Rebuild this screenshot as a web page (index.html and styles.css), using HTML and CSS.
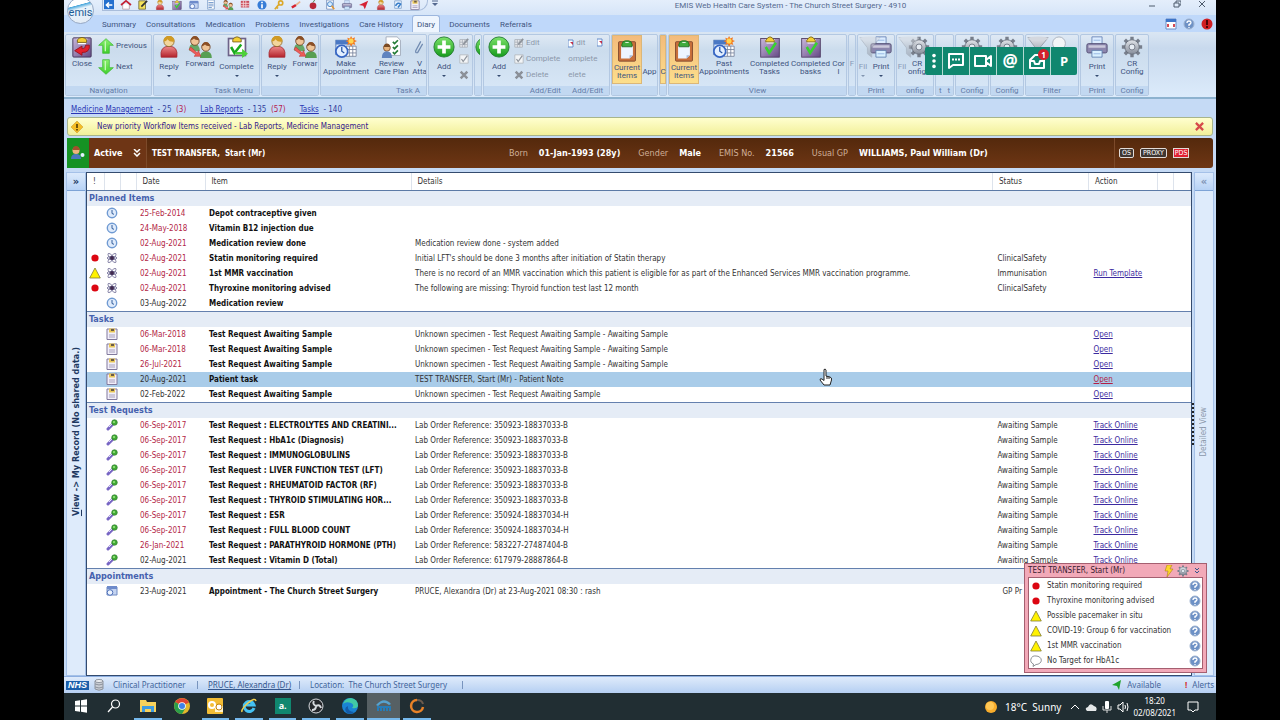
FILE: index.html
```html
<!DOCTYPE html>
<html lang="en">
<head>
    <meta charset="UTF-8">
    <title>EMIS Web Health Care System</title>
    <link rel="stylesheet" href="styles.css">
</head>
<body>
<svg class="defs" aria-hidden="true">
    <defs>
        <linearGradient id="gGreen" x1="0" y1="0" x2="0" y2="1"><stop offset="0" stop-color="#7de36a"/><stop offset="1" stop-color="#149a1c"/></linearGradient>
        <linearGradient id="gArrow" x1="0" y1="0" x2="0" y2="1"><stop offset="0" stop-color="#8df070"/><stop offset="1" stop-color="#3fce2c"/></linearGradient>
        <linearGradient id="gRed" x1="0" y1="0" x2="0" y2="1"><stop offset="0" stop-color="#ef8c8c"/><stop offset="1" stop-color="#b3222c"/></linearGradient>
        <linearGradient id="gPurple" x1="0" y1="0" x2="1" y2="1"><stop offset="0" stop-color="#c9b8dc"/><stop offset="1" stop-color="#644a84"/></linearGradient>
        <linearGradient id="gGrey" x1="0" y1="0" x2="0" y2="1"><stop offset="0" stop-color="#e2e5ea"/><stop offset="1" stop-color="#858c99"/></linearGradient>
    </defs>
    <symbol id="close" viewBox="0 0 24 24"><rect x="2" y="2" width="20" height="21" rx="1" fill="url(#gPurple)" stroke="#443358"/><path d="M6 3h12l-2 6H8z" fill="#fff"/><path d="M7 4q5-5 10 0v3H7z" fill="#f4cf35" stroke="#75601c"/><path d="M20 10q1 8-8 8v3l-8-5 8-5v3q4 0 4-4z" fill="#e5202c" stroke="#9a1420"/></symbol>
    <symbol id="up" viewBox="0 0 24 24"><path d="M12 1l11 10h-6v12H7V11H1z" fill="url(#gArrow)" stroke="#35b52b"/><path d="M11 5v15" stroke="#c8f9b8" stroke-width="2"/></symbol>
    <symbol id="down" viewBox="0 0 24 24"><path d="M12 23l11-10h-6V1H7v12H1z" fill="url(#gArrow)" stroke="#35b52b"/><path d="M11 3v14" stroke="#c8f9b8" stroke-width="2"/></symbol>
    <symbol id="person" viewBox="0 0 24 28"><path d="M2 27q-2-14 10-14t10 14z" fill="url(#gRed)" stroke="#a42a30"/><circle cx="12" cy="7" r="6.500" fill="#f3d59b" stroke="#8e6723"/><path d="M5 7Q5 0 12 0t7 7q-6 1-9-3-1 3-5 3" fill="#d19b24"/></symbol>
    <symbol id="people" viewBox="0 0 28 26"><path d="M1 17q0-8 6-8t7 9z" fill="#64a867"/><circle cx="8" cy="6" r="5" fill="#efc496" stroke="#704326"/><path d="M3 5q1-5 5-5t5 5q-5 0-6-2-2 2-4 2" fill="#8b4f25"/><path d="M14 26q0-8 7-8t7 8z" fill="#579f53"/><circle cx="21" cy="13" r="5" fill="#efc496" stroke="#704326"/><path d="M16 12q1-5 5-5t5 5q-5 0-6-2-2 2-4 2" fill="#8b4f25"/><path d="M3 13l8 7 1-3 3 7-8 0 2-2-8-6z" fill="#ed5c58" stroke="#ba2b2b" stroke-width=".6"/></symbol>
    <symbol id="complete" viewBox="0 0 26 26"><rect x="3" y="3" width="20" height="20" fill="#fff" stroke="#6d6389" stroke-width="2"/><path d="M8 4q5-6 10 0v3H8z" fill="#f4cf35" stroke="#75601c"/><path d="M6 13l4 7 8-10" fill="none" stroke="#19a91e" stroke-width="3"/><path d="M11 19h8v-4l7 6-7 5v-4h-8z" fill="#4dd139"/></symbol>
    <symbol id="clip" viewBox="0 0 24 26"><rect x="2" y="2" width="20" height="23" rx="1" fill="#c9703b" stroke="#77412a"/><path d="M5 7h14v11l-4 4H5z" fill="#eef5ff"/><path d="M19 18h-4v4" fill="#a9bbd8"/><path d="M6 5q1-4 4-4h4q3 0 4 4v3H6z" fill="#40ab3d" stroke="#1f6922"/><path d="M10 3h4" stroke="#fff"/></symbol>
    <symbol id="doneclip" viewBox="0 0 24 26"><rect x="1" y="3" width="22" height="22" fill="url(#gPurple)" stroke="#4b385f"/><path d="M6 4h12l-2 5H8z" fill="#fff"/><path d="M7 5q5-8 10 0v2H7z" fill="#f4cf35" stroke="#75601c"/><path d="M7 13l4 7 8-12" fill="none" stroke="#36d32f" stroke-width="3"/></symbol>
    <symbol id="appt" viewBox="0 0 26 26"><rect x="1" y="5" width="18" height="17" fill="#d8e5f8" stroke="#4e73ad"/><path d="M1 5h18v5H1z" fill="#4a78c4"/><path d="M13 12h12v12H13z" fill="#fff" stroke="#77839b"/><path d="M17 12v12M21 12v12M13 16h12M13 20h12" stroke="#77839b"/><path d="M19 0l1.500 3 3-1.500-.5 3.200 3 1.300-3 1.500 1 3-3-1-2 3-1.500-3-3 1 1-3-3-1.500 3-1-1-3 3 1z" fill="#f27b22"/><circle cx="19" cy="6" r="3" fill="#ffd551"/><circle cx="8" cy="18" r="7" fill="#e3efff" stroke="#3565c4" stroke-width="2"/><path d="M8 13v5l3 2" fill="none" stroke="#2855a5" stroke-width="1.500"/></symbol>
    <symbol id="plan" viewBox="0 0 24 26"><path d="M5 1h13l4 4v18H5z" fill="#fff" stroke="#9ba5b6"/><path d="M13 7l2 2 4-4M13 13l2 2 4-4M13 19l2 2 4-4" fill="none" stroke="#257c36" stroke-width="2"/><circle cx="6" cy="14" r="4" fill="#e8b57e" stroke="#7b4b25"/><path d="M0 26q0-8 6-8t6 8z" fill="#5f83bf"/><path d="M2 13q1-4 4-4t4 4" fill="#7b4b25"/></symbol>
    <symbol id="plus" viewBox="0 0 24 24"><circle cx="12" cy="12" r="11" fill="url(#gGreen)" stroke="#237d31"/><path d="M12 5v14M5 12h14" stroke="#fff" stroke-width="4"/></symbol>
    <symbol id="edit" viewBox="0 0 12 12"><path d="M1 2h9v9H1zM1 5h9M1 8h9M4 2v9M7 2v9" fill="#f0f2f4" stroke="#a6acb4"/><path d="M5 8l6-7" stroke="#8e949c" stroke-width="2"/></symbol>
    <symbol id="tick" viewBox="0 0 12 12"><path d="M1 1h10v10H1z" fill="#f3f5f7" stroke="#b0b6bd"/><path d="M3 6l2 3 5-7" fill="none" stroke="#8f959d" stroke-width="1.500"/></symbol>
    <symbol id="cross" viewBox="0 0 12 12"><path d="M2 2l8 8M10 2l-8 8" stroke="#8b9098" stroke-width="3"/></symbol>
    <symbol id="print" viewBox="0 0 26 26"><path d="M7 1h12v10H7z" fill="#dcecff" stroke="#6480b3"/><rect x="1" y="9" width="24" height="11" rx="2" fill="#8c86ad" stroke="#4f4b70"/><path d="M3 11h20v3H3z" fill="#cbc9dc"/><path d="M7 17h12v8H7z" fill="#d9f0ff" stroke="#5e7fae"/><path d="M9 5h8M9 21h8" stroke="#8eb1df"/></symbol>
    <symbol id="gear" viewBox="-13 -13 26 26"><g fill="#777e8b"><path d="M-2-12h4v24h-4z"/><path d="M-2-12h4v24h-4z" transform="rotate(45)"/><path d="M-2-12h4v24h-4z" transform="rotate(90)"/><path d="M-2-12h4v24h-4z" transform="rotate(135)"/></g><circle r="8.500" fill="url(#gGrey)" stroke="#666d79"/><circle r="3.500" fill="#e7edf4" stroke="#69707c"/></symbol>
    <symbol id="funnel" viewBox="0 0 26 26"><path d="M1 2h24L15 14v11l-5-4v-7z" fill="url(#gGrey)" stroke="#9299a4"/><ellipse cx="13" cy="3" rx="12" ry="2.500" fill="#d4d8df"/></symbol>
    <symbol id="clock" viewBox="0 0 12 12"><circle cx="6" cy="6" r="4.700" fill="#dfebfb" stroke="#6f9ad2" stroke-width="1.400"/><path d="M6 3v3.500l2 .8" fill="none" stroke="#315c9b"/></symbol>
    <symbol id="atom" viewBox="-6 -6 12 12"><g fill="none" stroke="#6a6792" stroke-width=".8"><ellipse rx="5.800" ry="1.800" transform="rotate(50)"/><ellipse rx="5" ry="1.500"/><ellipse rx="5.800" ry="1.800" transform="rotate(-50)"/></g><circle r="2" fill="#40294e"/></symbol>
    <symbol id="task" viewBox="0 0 12 12"><path d="M1 1h10v10.500H1z" fill="#f2effa" stroke="#81799c"/><path d="M3 .5h6v4H3z" fill="#eac85a"/><path d="M5 1h3v2H5z" fill="#6a5b48"/><path d="M3 7h6M3 9h6" stroke="#a7a0bc"/></symbol>
    <symbol id="tube" viewBox="0 0 12 12"><path d="M2 10l5-5" stroke="#7866c4" stroke-width="3" stroke-linecap="round"/><path d="M3 8l3-3" stroke="#e3dcff"/><circle cx="8.500" cy="3.500" r="2.800" fill="#42ab35" stroke="#28742a" stroke-width=".6"/><circle cx="8" cy="3" r="1" fill="#9de783"/></symbol>
    <symbol id="diary" viewBox="0 0 12 12"><path d="M1 2h10v8H1z" fill="#c4d4f1" stroke="#718bc2"/><path d="M1 1h10v3H1z" fill="#6e8bcb"/><circle cx="4" cy="7.500" r="2.800" fill="#eef5ff" stroke="#4d6fb8"/></symbol>
    <symbol id="dot" viewBox="0 0 12 12"><circle cx="6" cy="6" r="3.600" fill="#dc0612"/></symbol>
    <symbol id="warn" viewBox="0 0 12 12"><path d="M6 1l5.300 10H.7z" fill="#fff200" stroke="#817c35" stroke-width=".8"/></symbol>
    <symbol id="bubble" viewBox="0 0 12 12"><path d="M6 1a5 4 0 0 1 0 8.500L3 11.500l.5-2.500A4.500 4.200 0 0 1 6 1z" fill="#fff" stroke="#74777e" stroke-width=".8"/></symbol>
    <symbol id="help" viewBox="0 0 12 12"><circle cx="6" cy="6" r="5" fill="#6d91c6" stroke="#9eb2cf"/><path d="M4 5q0-2 2-2t2 1.500Q8 6 6 6.500V8M6 9v1" fill="none" stroke="#fff" stroke-width="1.300"/></symbol>
</svg>

<div class="window">
    <header>
        <div class="titlebar">
            <div class="quick">
                <svg viewBox="0 0 12 12"><path d="M0 0h12v11H0z" fill="#2470ce"/><path d="M10 6H3M6 3L3 6l3 3" fill="none" stroke="#fff" stroke-width="2"/></svg>
                <svg viewBox="0 0 12 12"><path d="M2 5v6h8V5" fill="#fff" stroke="#b59ca6"/><path d="M0 6l6-5 6 5" fill="none" stroke="#c42235" stroke-width="2"/></svg>
                <svg viewBox="0 0 12 12"><path d="M1 1h8v10H1z" fill="#f5e35a" stroke="#6f6835"/><path d="M4 8l7-7" stroke="#333" stroke-width="2"/></svg>
                <svg><use href="#person"/></svg>
                <svg><use href="#doneclip"/></svg>
                <svg><use href="#diary"/></svg>
                <svg viewBox="0 0 12 12"><path d="M2 0h8v11H2z" fill="#fff" stroke="#7d9dca"/><path d="M3 3h6M3 5h6M3 7h6M3 9h4" stroke="#638dc5"/></svg>
                <svg><use href="#people"/></svg>
                <svg viewBox="0 0 12 12"><path d="M1 1h10v8H1z" fill="#c94d5c"/><path d="M1 4h10M1 7h10M4 1v8M7 1v8" stroke="#f6dbe0"/></svg>
                <svg viewBox="0 0 12 12"><circle cx="6" cy="6" r="5.500" fill="#377dd7"/><path d="M6 2v2M6 5v5" stroke="#fff" stroke-width="2"/></svg>
                <svg viewBox="0 0 12 12"><circle cx="8" cy="3.500" r="2.500" fill="none" stroke="#dba82a" stroke-width="2"/><path d="M6 5l-5 6M3 9l2 1" stroke="#dba82a" stroke-width="2"/></svg>
                <svg viewBox="0 0 12 12"><path d="M1 9l5-3" stroke="#d62330" stroke-width="3"/><path d="M6 6l5-4" stroke="#e9b28d" stroke-width="2"/></svg>
                <svg viewBox="0 0 12 12"><circle cx="6" cy="7" r="4" fill="#b82838"/><path d="M6 3l2-3" stroke="#3d7231"/></svg>
                <svg viewBox="0 0 12 12"><path d="M2 0h8v11H2z" fill="#fff" stroke="#718bb8"/><circle cx="6" cy="5" r="3" fill="#d4ebff" stroke="#3778c2"/><path d="M8 7l3 4" stroke="#e09535" stroke-width="2"/></svg>
                <svg><use href="#print"/></svg>
                <svg viewBox="0 0 12 12"><path d="M0 6l11-5-4 10-2-4z" fill="#d52334"/></svg>
                <svg><use href="#person"/></svg>
                <svg viewBox="0 0 12 12"><path d="M2 1h8v9H2z" fill="#eaf4ff" stroke="#84a4cd"/><path d="M3 7q3-5 6-2L6 9" fill="none" stroke="#377cc8" stroke-width="2"/></svg>
                <svg><use href="#task"/></svg>
            </div>
            <svg class="more" viewBox="0 0 8 8"><path d="M1 1h6" stroke="#54698f"/><path d="M1 3h6L4 6z" fill="#54698f"/></svg>
            <h1>EMIS Web Health Care System - The Church Street Surgery - 4910</h1>
            <div class="winbuttons">
                <button aria-label="Minimise"><svg viewBox="0 0 8 8"><path d="M1 6h6" stroke="#4d5a6c"/></svg></button>
                <button aria-label="Restore"><svg viewBox="0 0 8 8"><path d="M1 3h5v4H1zM3 3V1h5v4H6" fill="none" stroke="#4d5a6c"/></svg></button>
                <button aria-label="Close window"><svg viewBox="0 0 8 8"><path d="M1 1l6 6M7 1L1 7" stroke="#4d5a6c"/></svg></button>
            </div>
        </div>
        <nav class="tabs">
            <a href="#">Summary</a>
            <a href="#">Consultations</a>
            <a href="#">Medication</a>
            <a href="#">Problems</a>
            <a href="#">Investigations</a>
            <a href="#">Care History</a>
            <a href="#" class="current">Diary</a>
            <a href="#">Documents</a>
            <a href="#">Referrals</a>
            <div class="tabicons">
                <svg viewBox="0 0 12 12"><path d="M1 1h10v10H1z" fill="#fff" stroke="#6a8ec6"/><path d="M1 1h10v3H1z" fill="#3e75c8"/><path d="M3 6v3M9 6v3" stroke="#d34b55" stroke-width="2"/></svg>
                <svg><use href="#help"/></svg>
                <svg viewBox="0 0 12 12"><circle cx="6" cy="6" r="5.500" fill="#d01f24"/><path d="M6 2v5M6 8v2" stroke="#4d0508" stroke-width="2"/></svg>
            </div>
        </nav>
        <div class="emis">emis</div>

        <div class="ribbon">
            <section class="group g-nav">
                <div class="tools">
                    <button class="tool w32"><svg><use href="#close"/></svg>Close</button>
                    <div class="stack">
                        <button><svg><use href="#up"/></svg>Previous</button>
                        <button><svg><use href="#down"/></svg>Next</button>
                    </div>
                </div>
                <h2>Navigation</h2>
            </section>
            <section class="group g-menu">
                <div class="tools">
                    <button class="tool low w30"><svg><use href="#person"/></svg>Reply<i></i></button>
                    <button class="tool w32"><svg><use href="#people"/></svg>Forward</button>
                    <button class="tool low w40"><svg><use href="#complete"/></svg>Complete<i></i></button>
                </div>
                <h2 class="right">Task Menu</h2>
            </section>
            <section class="group g-menu2">
                <div class="tools">
                    <button class="tool low w30"><svg><use href="#person"/></svg>Reply<i></i></button>
                    <button class="tool w25"><svg><use href="#people"/></svg>Forwar</button>
                </div>
                <h2></h2>
            </section>
            <section class="group g-actions">
                <div class="tools">
                    <button class="tool w50"><svg><use href="#appt"/></svg>Make<br>Appointment</button>
                    <button class="tool w40"><svg><use href="#plan"/></svg>Review<br>Care Plan</button>
                    <button class="tool w15"><svg viewBox="0 0 24 24"><path d="M14 3L6 18q-1 4 3 3l8-14" fill="none" stroke="#718bb1" stroke-width="2"/></svg>V<br>Atta</button>
                </div>
                <h2 class="right">Task A</h2>
            </section>
            <section class="group g-add">
                <div class="tools">
                    <button class="tool low w30"><svg><use href="#plus"/></svg>Add<i></i></button>
                    <div class="stack small">
                        <button disabled aria-label="Edit"><svg><use href="#edit"/></svg></button>
                        <button disabled aria-label="Complete"><svg><use href="#tick"/></svg></button>
                        <button disabled aria-label="Delete"><svg><use href="#cross"/></svg></button>
                    </div>
                </div>
                <h2></h2>
            </section>
            <section class="group g-sliver"><div class="tools"><svg class="cut" viewBox="0 0 6 24"><use href="#plus" width="24" height="24"/></svg></div><h2></h2></section>
            <section class="group g-edit">
                <div class="tools">
                    <button class="tool low w30"><svg><use href="#plus"/></svg>Add<i></i></button>
                    <div class="stack small">
                        <button disabled><svg><use href="#edit"/></svg>Edit</button>
                        <button disabled><svg><use href="#tick"/></svg>Complete</button>
                        <button disabled><svg><use href="#cross"/></svg>Delete</button>
                    </div>
                    <div class="stack small cutoff">
                        <button disabled><svg viewBox="0 0 6 9"><path d="M0 1h5v7H0z" fill="#fff" stroke="#668ecb"/><path d="M2 3h3v3" fill="#c1304a"/></svg>dit</button>
                        <button disabled>omplete</button>
                        <button disabled>elete</button>
                    </div>
                    <svg class="mini" viewBox="0 0 6 9"><path d="M0 1h5v7H0z" fill="#fff" stroke="#668ecb"/><path d="M2 3h3v3" fill="#c1304a"/></svg>
                </div>
                <h2 class="right"><span>Add/Edit</span><span>Add/Edit</span></h2>
            </section>
            <section class="group g-current">
                <div class="tools">
                    <button class="tool w30 on"><svg><use href="#clip"/></svg>Current<br>Items</button>
                    <button class="tool w15"><svg></svg><br>App</button>
                </div>
                <h2></h2>
            </section>
            <section class="group g-sliver"><div class="tools"><button class="tool w6 on"><svg></svg>C</button></div><h2></h2></section>
            <section class="group g-view">
                <div class="tools">
                    <button class="tool w30 on"><svg><use href="#clip"/></svg>Current<br>Items</button>
                    <button class="tool w50"><svg><use href="#appt"/></svg>Past<br>Appointments</button>
                    <button class="tool w40"><svg><use href="#doneclip"/></svg>Completed<br>Tasks</button>
                    <button class="tool w40"><svg><use href="#doneclip"/></svg>Completed<br>basks</button>
                    <button class="tool w15"><svg></svg>Cor<br>l</button>
                </div>
                <h2>View</h2>
            </section>
            <section class="group g-sliver"><div class="tools"><button class="tool w6 dim"><svg></svg>F</button></div><h2></h2></section>
            <section class="group g-print">
                <div class="tools">
                    <button class="tool low w10 dim"><svg><use href="#funnel"/></svg>Fil<i></i></button>
                    <button class="tool low w25"><svg><use href="#print"/></svg>Print<i></i></button>
                </div>
                <h2>Print</h2>
            </section>
            <section class="group g-print">
                <div class="tools">
                    <button class="tool low w10 dim"><svg><use href="#funnel"/></svg>Fil</button>
                    <button class="tool w20"><svg><use href="#gear"/></svg>CR<br>onfig</button>
                </div>
                <h2>onfig</h2>
            </section>
            <section class="group g-bits"><div class="tools"></div><h2>t &nbsp; t</h2></section>
            <section class="group g-config">
                <div class="tools"><button class="tool w32" aria-label="Config"><svg><use href="#gear"/></svg></button></div>
                <h2>Config</h2>
            </section>
            <section class="group g-config">
                <div class="tools"><button class="tool w32" aria-label="Config"><svg><use href="#gear"/></svg></button></div>
                <h2>Config</h2>
            </section>
            <section class="group g-filter">
                <div class="tools">
                    <button class="tool w20" aria-label="Filter"><svg><use href="#funnel"/></svg></button>
                    <button class="tool w25" aria-label="Show"><svg viewBox="0 0 24 24"><circle cx="12" cy="8" r="7" fill="#f3f5f7" stroke="#a8b0bb"/></svg></button>
                </div>
                <h2>Filter</h2>
            </section>
            <section class="group g-config">
                <div class="tools"><button class="tool low w32"><svg><use href="#print"/></svg>Print<i></i></button></div>
                <h2>Print</h2>
            </section>
            <section class="group g-config">
                <div class="tools"><button class="tool w32"><svg><use href="#gear"/></svg>CR<br>Config</button></div>
                <h2>Config</h2>
            </section>
        </div>

        <div class="dock">
            <button class="grip" aria-label="Move"><svg viewBox="0 0 6 20"><circle cx="3" cy="4" r="2" fill="#fff"/><circle cx="3" cy="10" r="2" fill="#fff"/><circle cx="3" cy="16" r="2" fill="#fff"/></svg></button>
            <button aria-label="Message"><svg viewBox="0 0 18 18"><path d="M2 2h14v11H6l-4 3z" fill="none" stroke="#fff" stroke-width="2" stroke-linejoin="round"/><path d="M5 7.500h2M8 7.500h2M11 7.500h2" stroke="#fff" stroke-width="2"/></svg></button>
            <button aria-label="Video"><svg viewBox="0 0 18 18"><path d="M1 4h11v10H1zM12 8l5-4v10l-5-4" fill="none" stroke="#fff" stroke-width="2" stroke-linejoin="round"/></svg></button>
            <button class="at">@</button>
            <button class="inbox" aria-label="Inbox"><svg viewBox="0 0 18 18"><path d="M2 8l5-5h4l5 5v8H2zM2 9h4l1 3h4l1-3h4" fill="none" stroke="#fff" stroke-width="2" stroke-linejoin="round"/></svg><span>1</span></button>
            <button>P</button>
        </div>
    </header>

    <div class="workflow">
        <p><a href="#">Medicine Management</a>&nbsp; - 25 &nbsp;<em>(3)</em></p>
        <p><a href="#">Lab Reports</a>&nbsp; - 135 &nbsp;<em>(57)</em></p>
        <p><a href="#">Tasks</a>&nbsp; - 140</p>
    </div>

    <div class="notice">
        <svg viewBox="0 0 12 12"><path d="M6 0l6 6-6 6-6-6z" fill="#f5bd27" stroke="#c79524" stroke-width=".5"/><path d="M6 3v4M6 8v1.500" stroke="#443000" stroke-width="1.500"/></svg>
        <span>New priority Workflow Items received - Lab Reports, Medicine Management</span>
        <button aria-label="Dismiss"><svg viewBox="0 0 10 10"><path d="M1 1l8 8M9 1L1 9" stroke="#d64b4b" stroke-width="2.500"/></svg></button>
    </div>

    <div class="patient">
        <div class="avatar"><svg viewBox="0 0 14 14"><path d="M0 13q0-5 5-5t5 5z" fill="#4878bd"/><circle cx="5" cy="4.500" r="3.500" fill="#edb47e"/><path d="M1.500 4Q2 0 5 0t4 4" fill="#a3502d"/><circle cx="11.500" cy="9" r="2" fill="#e3f2ff"/></svg></div>
        <button class="state">Active <svg viewBox="0 0 8 8"><path d="M1 0l3 3 3-3M1 4l3 3 3-3" fill="none" stroke="#fff" stroke-width="1.500"/></svg></button>
        <strong class="name">TEST TRANSFER,&nbsp; Start (Mr)</strong>
        <dl>
            <div><dt>Born</dt><dd>01-Jan-1993 (28y)</dd></div>
            <div><dt>Gender</dt><dd>Male</dd></div>
            <div><dt>EMIS No.</dt><dd>21566</dd></div>
            <div><dt>Usual GP</dt><dd>WILLIAMS, Paul William (Dr)</dd></div>
        </dl>
        <div class="tags"><span>OS</span><span>PROXY</span><span class="pds">PDS</span></div>
    </div>

    <main>
        <aside class="side">
            <button aria-label="Expand record">&raquo;</button>
            <p><u>V</u>iew -&gt; My Record (No shared data.)</p>
        </aside>
        <div class="list">
            <table>
                <colgroup><col class="c-flag"><col class="c-icon"><col class="c-icon"><col class="c-date"><col class="c-item"><col><col class="c-status"><col class="c-action"><col class="c-icon"><col class="c-flag"></colgroup>
                <thead>
                    <tr><th>!</th><th></th><th></th><th>Date</th><th>Item</th><th>Details</th><th>Status</th><th>Action</th><th></th><th></th></tr>
                </thead>
                <tbody>
                    <tr class="head"><th colspan="10">Planned Items</th></tr>
                    <tr><td></td><td><svg><use href="#clock"/></svg></td><td></td><td class="due">25-Feb-2014</td><td>Depot contraceptive given</td><td></td><td></td><td></td><td></td><td></td></tr>
                    <tr><td></td><td><svg><use href="#clock"/></svg></td><td></td><td class="due">24-May-2018</td><td>Vitamin B12 injection due</td><td></td><td></td><td></td><td></td><td></td></tr>
                    <tr><td></td><td><svg><use href="#clock"/></svg></td><td></td><td class="due">02-Aug-2021</td><td>Medication review done</td><td>Medication review done - system added</td><td></td><td></td><td></td><td></td></tr>
                    <tr><td><svg><use href="#dot"/></svg></td><td><svg><use href="#atom"/></svg></td><td></td><td class="due">02-Aug-2021</td><td>Statin monitoring required</td><td>Initial LFT's should be done 3 months after initiation of Statin therapy</td><td>ClinicalSafety</td><td></td><td></td><td></td></tr>
                    <tr><td><svg><use href="#warn"/></svg></td><td><svg><use href="#atom"/></svg></td><td></td><td class="due">02-Aug-2021</td><td>1st MMR vaccination</td><td>There is no record of an MMR vaccination which this patient is eligible for as part of the Enhanced Services MMR vaccination programme.</td><td>Immunisation</td><td><a href="#">Run Template</a></td><td></td><td></td></tr>
                    <tr><td><svg><use href="#dot"/></svg></td><td><svg><use href="#atom"/></svg></td><td></td><td class="due">02-Aug-2021</td><td>Thyroxine monitoring advised</td><td>The following are missing: Thyroid function test last 12 month</td><td>ClinicalSafety</td><td></td><td></td><td></td></tr>
                    <tr><td></td><td><svg><use href="#clock"/></svg></td><td></td><td>03-Aug-2022</td><td>Medication review</td><td></td><td></td><td></td><td></td><td></td></tr>
                </tbody>
                <tbody>
                    <tr class="head"><th colspan="10">Tasks</th></tr>
                    <tr><td></td><td><svg><use href="#task"/></svg></td><td></td><td class="due">06-Mar-2018</td><td>Test Request Awaiting Sample</td><td>Unknown specimen - Test Request Awaiting Sample - Awaiting Sample</td><td></td><td><a href="#">Open</a></td><td></td><td></td></tr>
                    <tr><td></td><td><svg><use href="#task"/></svg></td><td></td><td class="due">06-Mar-2018</td><td>Test Request Awaiting Sample</td><td>Unknown specimen - Test Request Awaiting Sample - Awaiting Sample</td><td></td><td><a href="#">Open</a></td><td></td><td></td></tr>
                    <tr><td></td><td><svg><use href="#task"/></svg></td><td></td><td class="due">26-Jul-2021</td><td>Test Request Awaiting Sample</td><td>Unknown specimen - Test Request Awaiting Sample - Awaiting Sample</td><td></td><td><a href="#">Open</a></td><td></td><td></td></tr>
                    <tr class="selected"><td></td><td><svg><use href="#task"/></svg></td><td></td><td>20-Aug-2021</td><td>Patient task</td><td>TEST TRANSFER, Start (Mr) - Patient Note</td><td></td><td><a href="#">Open</a></td><td></td><td></td></tr>
                    <tr><td></td><td><svg><use href="#task"/></svg></td><td></td><td>02-Feb-2022</td><td>Test Request Awaiting Sample</td><td>Unknown specimen - Test Request Awaiting Sample</td><td></td><td><a href="#">Open</a></td><td></td><td></td></tr>
                </tbody>
                <tbody>
                    <tr class="head"><th colspan="10">Test Requests</th></tr>
                    <tr><td></td><td><svg><use href="#tube"/></svg></td><td></td><td class="due">06-Sep-2017</td><td>Test Request : ELECTROLYTES AND CREATINI...</td><td>Lab Order Reference: 350923-18837033-B</td><td>Awaiting Sample</td><td><a href="#">Track Online</a></td><td></td><td></td></tr>
                    <tr><td></td><td><svg><use href="#tube"/></svg></td><td></td><td class="due">06-Sep-2017</td><td>Test Request : HbA1c (Diagnosis)</td><td>Lab Order Reference: 350923-18837033-B</td><td>Awaiting Sample</td><td><a href="#">Track Online</a></td><td></td><td></td></tr>
                    <tr><td></td><td><svg><use href="#tube"/></svg></td><td></td><td class="due">06-Sep-2017</td><td>Test Request : IMMUNOGLOBULINS</td><td>Lab Order Reference: 350923-18837033-B</td><td>Awaiting Sample</td><td><a href="#">Track Online</a></td><td></td><td></td></tr>
                    <tr><td></td><td><svg><use href="#tube"/></svg></td><td></td><td class="due">06-Sep-2017</td><td>Test Request : LIVER FUNCTION TEST (LFT)</td><td>Lab Order Reference: 350923-18837033-B</td><td>Awaiting Sample</td><td><a href="#">Track Online</a></td><td></td><td></td></tr>
                    <tr><td></td><td><svg><use href="#tube"/></svg></td><td></td><td class="due">06-Sep-2017</td><td>Test Request : RHEUMATOID FACTOR (RF)</td><td>Lab Order Reference: 350923-18837033-B</td><td>Awaiting Sample</td><td><a href="#">Track Online</a></td><td></td><td></td></tr>
                    <tr><td></td><td><svg><use href="#tube"/></svg></td><td></td><td class="due">06-Sep-2017</td><td>Test Request : THYROID STIMULATING HOR...</td><td>Lab Order Reference: 350923-18837033-B</td><td>Awaiting Sample</td><td><a href="#">Track Online</a></td><td></td><td></td></tr>
                    <tr><td></td><td><svg><use href="#tube"/></svg></td><td></td><td class="due">06-Sep-2017</td><td>Test Request : ESR</td><td>Lab Order Reference: 350924-18837034-H</td><td>Awaiting Sample</td><td><a href="#">Track Online</a></td><td></td><td></td></tr>
                    <tr><td></td><td><svg><use href="#tube"/></svg></td><td></td><td class="due">06-Sep-2017</td><td>Test Request : FULL BLOOD COUNT</td><td>Lab Order Reference: 350924-18837034-H</td><td>Awaiting Sample</td><td><a href="#">Track Online</a></td><td></td><td></td></tr>
                    <tr><td></td><td><svg><use href="#tube"/></svg></td><td></td><td class="due">26-Jan-2021</td><td>Test Request : PARATHYROID HORMONE (PTH)</td><td>Lab Order Reference: 583227-27487404-B</td><td>Awaiting Sample</td><td><a href="#">Track Online</a></td><td></td><td></td></tr>
                    <tr><td></td><td><svg><use href="#tube"/></svg></td><td></td><td>02-Aug-2021</td><td>Test Request : Vitamin D (Total)</td><td>Lab Order Reference: 617979-28887864-B</td><td>Awaiting Sample</td><td><a href="#">Track Online</a></td><td></td><td></td></tr>
                </tbody>
                <tbody>
                    <tr class="head"><th colspan="10">Appointments</th></tr>
                    <tr><td></td><td><svg><use href="#diary"/></svg></td><td></td><td>23-Aug-2021</td><td>Appointment - The Church Street Surgery</td><td>PRUCE, Alexandra (Dr) at 23-Aug-2021 08:30 : rash</td><td class="place">GP Pr</td><td></td><td></td><td></td></tr>
                </tbody>
            </table>
        </div>
        <div class="splitter"></div>
        <aside class="side detail">
            <button aria-label="Expand details">&laquo;</button>
            <p>Detailed View</p>
        </aside>

        <section class="alerts">
            <h2>TEST TRANSFER, Start (Mr)
                <svg viewBox="0 0 12 12"><path d="M4 0h5L7 4h3L4 12l1-6H2z" fill="#ffd52a" stroke="#ad8217" stroke-width=".6"/></svg>
                <svg><use href="#gear"/></svg>
                <svg viewBox="0 0 12 12"><path d="M4 3l2 2 2-2M4 6l2 2 2-2" fill="none" stroke="#35558c"/></svg>
            </h2>
            <ul>
                <li><svg><use href="#dot"/></svg><span>Statin monitoring required</span><svg><use href="#help"/></svg></li>
                <li><svg><use href="#dot"/></svg><span>Thyroxine monitoring advised</span><svg><use href="#help"/></svg></li>
                <li><svg><use href="#warn"/></svg><span>Possible pacemaker in situ</span><svg><use href="#help"/></svg></li>
                <li><svg><use href="#warn"/></svg><span>COVID-19: Group 6 for vaccination</span><svg><use href="#help"/></svg></li>
                <li><svg><use href="#warn"/></svg><span>1st MMR vaccination</span><svg><use href="#help"/></svg></li>
                <li><svg><use href="#bubble"/></svg><span>No Target for HbA1c</span><svg><use href="#help"/></svg></li>
            </ul>
        </section>
        <svg class="hand" viewBox="0 0 14 18"><path d="M5 1.500q1.500-1 2 .5v6l4 1q2 .5 1.500 3L11 17H5l-4-5q0-2 2-1l2 1.500z" fill="#fff" stroke="#222"/><path d="M8 8v3M10 9v2" stroke="#222"/></svg>
    </main>

    <div class="status">
        <b class="nhs">NHS</b>
        <svg viewBox="0 0 12 12"><path d="M2 2v8q4 2.500 8 0V2" fill="#c9cdd4" stroke="#8d939d"/><ellipse cx="6" cy="2" rx="4" ry="1.500" fill="#f1f2f4" stroke="#8d939d"/><path d="M2 5q4 2 8 0M2 8q4 2 8 0" fill="none" stroke="#8d939d"/></svg>
        <span class="role">Clinical Practitioner</span>
        <span class="user"><a href="#">PRUCE, Alexandra (Dr)</a></span>
        <span class="location">Location:&nbsp; The Church Street Surgery</span>
        <span class="available"><svg viewBox="0 0 12 12"><path d="M1 6l9-5-2 10-2-4z" fill="#20a32b"/></svg>Available</span>
        <span class="alert"><b>!</b>Alerts</span>
    </div>

    <footer>
        <div class="apps">
            <button aria-label="Start"><svg viewBox="0 0 16 16"><path d="M2 3l5-.7v5.200H2zM8 2.200l6-.9v6.200H8zM2 8.500h5v5.200L2 13zM8 8.500h6v6.200l-6-.9z" fill="#fff"/></svg></button>
            <button aria-label="Search"><svg viewBox="0 0 16 16"><circle cx="9.500" cy="6" r="4" fill="none" stroke="#fff" stroke-width="1.200"/><path d="M6.500 9L2 14" stroke="#fff" stroke-width="1.200"/></svg></button>
            <button class="open" aria-label="Files"><svg viewBox="0 0 16 16"><path d="M0 2h6l1 2h9v10H0z" fill="#f7d15b"/><path d="M2 14V8h12v6h-3v-3H5v3z" fill="#3e9be0"/></svg></button>
            <button aria-label="Chrome"><svg viewBox="0 0 16 16"><circle cx="8" cy="8" r="8" fill="#e3b72c"/><path d="M8 8L1.200 4A8 8 0 0 1 15 4.500z" fill="#df4434"/><path d="M8 8L1.200 4A8 8 0 0 0 8 16l3.500-6z" fill="#2b9e4a"/><circle cx="8" cy="8" r="3.800" fill="#fff"/><circle cx="8" cy="8" r="3" fill="#3f82ea"/></svg></button>
            <button class="open" aria-label="Outlook"><svg viewBox="0 0 16 16"><rect width="16" height="16" rx="1" fill="#f3bd35"/><circle cx="5" cy="7" r="3" fill="none" stroke="#fff" stroke-width="2"/><path d="M8 8h8v6H8z" fill="#fff4cf"/><circle cx="12" cy="9" r="3" fill="#fff" stroke="#c28210"/></svg></button>
            <button class="open" aria-label="Internet Explorer"><svg viewBox="0 0 16 16"><path d="M13 10A5 5 0 1 1 13 7H4" fill="none" stroke="#45c2f3" stroke-width="3"/><path d="M1 14Q0 11 7 5t8-2" fill="none" stroke="#f3cf4c" stroke-width="1.500"/></svg></button>
            <button class="open" aria-label="AccuRx"><span class="accu">a.</span></button>
            <button class="open" aria-label="OBS"><svg viewBox="0 0 16 16"><circle cx="8" cy="8" r="7" fill="#25272b" stroke="#d7dade"/><path d="M8 8Q4 6 6 3M8 8q4-2 5 2M8 8q0 4-4 4" fill="none" stroke="#d7dade" stroke-width="2"/></svg></button>
            <button class="open" aria-label="Edge"><svg viewBox="0 0 16 16"><circle cx="8" cy="8" r="8" fill="#1a83d4"/><path d="M1 6Q3 0 9 0q7 1 7 8-1 3-6 2 3-3-1-5-5-2-8 1" fill="#42c9a5"/><path d="M6 8q-1 5 6 6-3 3-7 1-4-5 1-7" fill="#145ba8"/></svg></button>
            <button class="open active" aria-label="EMIS"><svg viewBox="0 0 16 16"><path d="M0 7q8-9 15-1l-2 1Q7 2 2 8z" fill="#56a2ce"/><path d="M2 8v5M5 9v4M8 8v5M11 9v4M14 8v5M2 9h12" stroke="#267cb7" stroke-width="2"/></svg></button>
            <button class="open" aria-label="Recorder"><svg viewBox="0 0 16 16"><path d="M8 2a6 6 0 1 0 6 7" fill="none" stroke="#e98227" stroke-width="2.500"/><path d="M8 2q5 0 6 4" fill="none" stroke="#6d5b4d" stroke-width="2"/></svg></button>
        </div>
        <div class="tray">
            <svg class="sun" viewBox="0 0 12 12"><circle cx="6" cy="6" r="6" fill="#f8ad2c"/><circle cx="5" cy="5" r="4" fill="#ffc755"/></svg>
            <span class="weather">18°C&nbsp; Sunny</span>
            <svg viewBox="0 0 12 12"><path d="M2 8l4-4 4 4" fill="none" stroke="#fff"/></svg>
            <svg viewBox="0 0 12 12"><path d="M2 10q-3-3 1-4 2-5 6-1 4 1 2 5z" fill="#e5e8e9"/></svg>
            <svg viewBox="0 0 12 12"><rect x="4" y="0" width="4" height="8" rx="1" fill="#fff"/><path d="M2 5v4h8V5M6 9v3" fill="none" stroke="#ddd"/></svg>
            <svg viewBox="0 0 12 12"><path d="M1 4h2l3-3v10L3 8H1zM8 4q1 2 0 4M10 2q2 4 0 8" fill="none" stroke="#fff"/></svg>
            <time>18:20<br>02/08/2021</time>
            <svg viewBox="0 0 12 12"><path d="M1 1h10v8H8l-2 2-2-2H1z" fill="none" stroke="#fff"/></svg>
        </div>
    </footer>
</div>
</body>
</html>
```
FILE: styles.css
```css
* {
    box-sizing: border-box;
    padding: 0;
    margin: 0;
}

body {
    background: #000;
    font: 8px/15px "DejaVu Sans Condensed", "DejaVu Sans", sans-serif;
    color: #333;
}

button {
    border: 0;
    background: none;
    font: inherit;
    color: inherit;
}

svg {
    width: 12px;
    height: 12px;
    flex: none;
}

a {
    color: #3c2ba0;
}

.defs {
    position: absolute;
    width: 0;
    height: 0;
}

.window {
    position: relative;
    display: flex;
    flex-direction: column;
    min-height: 100vh;
    margin: 0 5%;
    background: #c5daf5;
}

header {
    position: relative;
    font-family: Roboto, sans-serif;
    color: #405480;
}

/* title bar */
.titlebar {
    display: flex;
    align-items: flex-start;
    height: 15px;
    padding-left: 38px;
    background: linear-gradient(#e4eefb, #d6e5f8);
}

.quick {
    display: flex;
    justify-content: space-between;
    width: 326px;
    height: 11px;
    padding: 0 6px 0 0;
    border: 1px solid #a9bddb;
    border-top: 0;
    border-radius: 0 0 10px 0;
    overflow: hidden;
}

.quick svg {
    height: 10px;
}

.titlebar .more {
    width: 8px;
    height: 8px;
    margin-left: 3px;
}

.titlebar h1 {
    flex: 1;
    padding-right: 6px;
    text-align: center;
    font-size: 8px;
    line-height: 11px;
    font-weight: normal;
    color: #54698f;
}

.winbuttons {
    display: flex;
    gap: 17px;
    padding-right: 10px;
}

.winbuttons svg {
    display: block;
    width: 8px;
    height: 8px;
}

/* tabs */
.tabs {
    display: flex;
    height: 17px;
    padding-left: 33px;
    background: #bfd8fa;
    line-height: 19px;
}

.tabs a {
    padding: 0 5px;
    color: #405480;
    text-decoration: none;
}

.tabs .current {
    background: #eef5fe;
    border: 1px solid #9cb6de;
    border-bottom: 0;
    border-radius: 3px 3px 0 0;
    line-height: 17px;
    padding: 0 4px;
    margin: 0 4px;
}

.tabicons {
    display: flex;
    gap: 6px;
    margin-left: auto;
    padding: 3px 3px 0;
}

.emis {
    position: absolute;
    left: 3px;
    top: -3px;
    width: 27px;
    height: 27px;
    border: 1px solid #97a9c4;
    border-radius: 50%;
    background: linear-gradient(165deg, #fff 30%, #49a7dc 32%, #e8f3fb 44%, #e3ebf5);
    text-align: center;
    font-size: 11px;
    line-height: 30px;
    color: #1d5a94;
}

/* ribbon */
.ribbon {
    display: flex;
    height: 67px;
    padding: 2px 1px;
    gap: 1px;
    background: linear-gradient(#dae6f3, #c8d9ed 25%, #dcebfb);
    border-bottom: 2px solid #8db2cf;
    line-height: 8px;
}

.group {
    display: flex;
    flex: none;
    flex-direction: column;
    height: 62px;
    border: 1px solid #b3c8e2;
    border-radius: 2px;
    overflow: hidden;
    background: linear-gradient(#dfe9f4, #cbdced 25%, #d9e8f8);
}

.group h2 {
    height: 9px;
    background: #c2d8f1;
    text-align: center;
    font-size: 8px;
    line-height: 9px;
    font-weight: normal;
    color: #657da8;
    white-space: nowrap;
}

.group h2.right {
    text-align: right;
    padding-right: 6px;
}

.group h2 span {
    margin-left: 11px;
}

.tools {
    display: flex;
    flex: 1;
    align-items: flex-start;
}

.tool {
    flex: none;
    display: block;
    text-align: center;
    white-space: nowrap;
}

.tool svg {
    display: block;
    width: 24px;
    height: 22px;
    margin: 1px auto 2px;
}

.tool.low svg {
    margin-bottom: 5px;
}

.tool i {
    display: block;
    width: 0;
    margin: 4px auto 0;
    border: 2px solid transparent;
    border-top-color: #344a70;
}

.w6 { width: 6px; }
.w10 { width: 10px; }
.w15 { width: 15px; }
.w20 { width: 20px; }
.w25 { width: 26px; }
.w30 { width: 30px; }
.w32 { width: 32px; }
.w40 { width: 41px; }
.w50 { width: 50px; }

.tool.on {
    height: 49px;
    background: linear-gradient(#f3ba7b, #fde08c);
    box-shadow: inset 0 0 0 1px #dcb778;
}

.w6 svg, .w15 svg {
    width: 100%;
}

.dim {
    opacity: .5;
}

.stack {
    display: flex;
    flex-direction: column;
}

.stack button {
    display: flex;
    align-items: center;
    gap: 2px;
    height: 21px;
    white-space: nowrap;
}

.stack svg {
    width: 16px;
    height: 16px;
}

.stack.small button {
    height: 16px;
    color: #8c98aa;
}

.stack.small svg {
    width: 10px;
    height: 10px;
}

.stack.cutoff {
    padding-left: 8px;
}

.stack.cutoff svg, .mini {
    width: 6px;
    height: 9px;
}

.mini {
    margin-top: 3px;
}

.cut {
    width: 5px;
    height: 22px;
    margin-top: 1px;
}

.g-nav { width: 87px; }
.g-menu { width: 107px; }
.g-menu2 { width: 58px; }
.g-actions { width: 107px; }
.g-add { width: 45px; }
.g-sliver { width: 8px; }
.g-edit { width: 127px; }
.g-current { width: 47px; }
.g-view { width: 179px; }
.g-print { width: 38px; }
.g-bits { width: 19px; }
.g-config { width: 34px; }
.g-filter { width: 54px; }

/* floating dock over the ribbon */
.dock {
    position: absolute;
    right: 139px;
    top: 47px;
    display: flex;
    height: 28px;
    border-radius: 2px;
    background: #10876f;
    font: bold 13px/28px "Open Sans", sans-serif;
    color: #fff;
}

.dock button {
    position: relative;
    display: flex;
    align-items: center;
    justify-content: center;
    width: 27px;
    border-left: 1px solid #b4dad2;
}

.dock .grip {
    width: 17px;
    border: 0;
}

.dock svg {
    width: 18px;
    height: 18px;
}

.dock .at {
    font-size: 17px;
}

.inbox span {
    position: absolute;
    right: 1px;
    top: 2px;
    width: 11px;
    height: 11px;
    border-radius: 50%;
    background: #d3202c;
    font-size: 8px;
    line-height: 11px;
}

/* workflow counts and notice */
.workflow {
    display: flex;
    gap: 14px;
    height: 18px;
    padding: 0 7px;
    line-height: 22px;
    color: #32409c;
}

.workflow a {
    color: #2b36b4;
}

.workflow em {
    font-style: normal;
    color: #b52050;
}

.notice {
    display: flex;
    align-items: center;
    height: 19px;
    margin: 0 3px 0 3px;
    padding: 0 8px 0 3px;
    gap: 14px;
    border: 1px solid #a8b58b;
    border-radius: 3px;
    background: linear-gradient(#ffffcf, #f2f09a);
    color: #33208c;
}

.notice button {
    margin-left: auto;
}

.notice button svg {
    display: block;
    width: 9px;
    height: 9px;
}

/* patient banner */
.patient {
    display: flex;
    align-items: stretch;
    height: 30px;
    margin: 2px 3px 4px;
    border-radius: 0 3px 3px 0;
    background: linear-gradient(#54290c, #6e3614);
    font-size: 9px;
    line-height: 31px;
    color: #fff;
}

.avatar {
    display: flex;
    align-items: center;
    justify-content: center;
    width: 22px;
    background: #159223;
}

.avatar svg {
    width: 14px;
    height: 14px;
}

.state {
    display: flex;
    align-items: center;
    justify-content: space-between;
    width: 58px;
    padding: 0 5px;
    border-right: 1px solid #7c4a2a;
    background: #6e3515;
    font-weight: bold;
    color: #fff;
}

.state svg {
    width: 8px;
    height: 8px;
}

.name {
    width: 362px;
    padding-left: 5px;
    font-size: 8px;
}

.patient dl, .patient dl div {
    display: flex;
}

.patient dl {
    flex: 1;
    gap: 18px;
}

.patient dl div {
    gap: 11px;
}

.patient dt {
    color: #cfae97;
}

.patient dd {
    font-weight: bold;
}

.tags {
    display: flex;
    align-items: center;
    gap: 6px;
    width: 99px;
    padding-left: 4px;
    border-left: 1px solid #7c4a2a;
    font-size: 7px;
    line-height: 8px;
}

.tags span {
    padding: 0 2px;
    border: 1px solid #e2dcd8;
    border-radius: 2px;
    background: #3f3733;
}

.tags .pds {
    padding: 0 1px;
    border-radius: 0;
    background: #e02030;
}

/* main area */
main {
    position: relative;
    display: flex;
    flex: 1;
    padding: 0 2px;
}

.side {
    display: flex;
    flex-direction: column;
    align-items: center;
    width: 20px;
    border: 1px solid #a5c1e8;
    background: #deebfb;
    font-size: 9px;
    color: #20385f;
}

.side button {
    width: 100%;
    height: 18px;
    border-bottom: 1px solid #7da3d6;
    background: linear-gradient(#dceafc, #b7d2f5);
    font-size: 11px;
    font-weight: bold;
    line-height: 14px;
}

.side p {
    writing-mode: vertical-rl;
    transform: rotate(180deg);
    margin-top: 156px;
    font-weight: bold;
    line-height: 16px;
}

.splitter {
    align-self: center;
    width: 2px;
    height: 42px;
    background: repeating-linear-gradient(#222 0 2px, #c5daf5 2px 4px);
}

.detail button {
    color: #7d91b3;
}

.detail p {
    margin-top: 216px;
    font-size: 8px;
    font-weight: normal;
    color: #8b98aa;
}

.list {
    flex: 1;
    border: 1px solid #344b6e;
    background: #fff;
}

table {
    width: 100%;
    table-layout: fixed;
    border-collapse: collapse;
}

.c-flag { width: 17px; }
.c-icon { width: 16px; }
.c-date { width: 69px; }
.c-item { width: 206px; }
.c-status { width: 96px; }
.c-action { width: 69px; }

th {
    text-align: left;
    font-weight: normal;
}

thead th {
    height: 17px;
    padding: 2px 0 0 6px;
    border-right: 1px solid #dde3ec;
    border-bottom: 1px solid #5c7aa6;
    line-height: 14px;
}

tbody tr {
    height: 15px;
}

td {
    height: 15px;
    padding-left: 4px;
    white-space: nowrap;
    overflow: hidden;
}

td:nth-child(-n+3) {
    padding-left: 2px;
}

td:nth-child(n+7) {
    padding-left: 5px;
}

td svg {
    display: block;
}

td:nth-child(5) {
    font-weight: bold;
    color: #111;
}

.due {
    color: #b31f46;
}

td.place {
    padding-left: 10px;
}

.head th {
    height: 15px;
    padding-left: 2px;
    background: #e5ecf6;
    font-size: 9px;
    font-weight: bold;
    color: #4561ae;
}

tbody + tbody .head th {
    border-top: 1px solid #6480ae;
}

.selected {
    background: #a9cce9;
}

.selected a {
    color: #b31f46;
}

/* patient alerts popup */
.alerts {
    position: absolute;
    right: 9px;
    bottom: 3px;
    width: 183px;
    padding: 0 3px 3px;
    border: 1px solid #a55f70;
    background: #f2a9b8;
}

.alerts h2 {
    display: flex;
    align-items: center;
    gap: 2px;
    height: 13px;
    font-size: 8px;
    font-weight: normal;
    color: #3a2030;
}

.alerts h2 svg:first-of-type {
    margin-left: auto;
}

.alerts ul {
    border: 1px solid #a55f70;
    background: #fff;
    list-style: none;
}

.alerts li {
    display: flex;
    align-items: center;
    gap: 5px;
    height: 15px;
    padding: 0 1px;
    white-space: nowrap;
}

.alerts li span {
    flex: 1;
}

.hand {
    position: absolute;
    left: 755px;
    top: 196px;
    width: 14px;
    height: 18px;
}

/* status bar */
.status {
    display: flex;
    align-items: center;
    height: 17px;
    padding: 0 2px;
    border-top: 1px solid #8caee0;
    background: linear-gradient(#dfebfb, #b5cff2);
    font: 8px/16px "Noto Sans", sans-serif;
    color: #43669c;
}

.status a {
    color: #34578e;
}

.nhs {
    width: 23px;
    margin-right: 4px;
    background: #1a5eab;
    text-align: center;
    font: italic bold 9px/9px "Liberation Sans", sans-serif;
    color: #fff;
}

.role {
    margin-left: 8px;
    width: 84px;
}

.user, .location {
    padding-left: 10px;
    border-left: 1px solid #7894be;
    line-height: 8px;
    white-space: nowrap;
}

.user {
    width: 102px;
}

.location {
    width: 164px;
    border-right: 1px solid #7894be;
}

.available {
    display: flex;
    align-items: center;
    gap: 4px;
    margin-left: auto;
}

.alert {
    margin-left: 24px;
}

.alert b {
    margin-right: 5px;
    color: #d32a25;
}

/* windows taskbar */
footer {
    display: flex;
    justify-content: space-between;
    height: 27px;
    background: #212e33;
    color: #fff;
}

.apps {
    display: flex;
    width: 370px;
}

.apps button {
    display: flex;
    flex: 1;
    align-items: center;
    justify-content: center;
    border-bottom: 2px solid transparent;
    margin: 0 3px;
}

.apps .open {
    border-bottom-color: #76b9ed;
}

.apps .active {
    margin: 0;
    padding: 0 3px;
    background: #566064;
}

.apps svg {
    width: 16px;
    height: 16px;
}

.accu {
    width: 16px;
    height: 16px;
    background: #10876f;
    font: bold 9px/16px "Open Sans", sans-serif;
}

.tray {
    display: flex;
    align-items: center;
    gap: 4px;
    padding-right: 17px;
    font: 8px/12px "Noto Sans", sans-serif;
}

.tray time {
    margin-right: 7px;
    text-align: center;
}

.weather {
    font-size: 10px;
    margin: 0 4px;
}
```
